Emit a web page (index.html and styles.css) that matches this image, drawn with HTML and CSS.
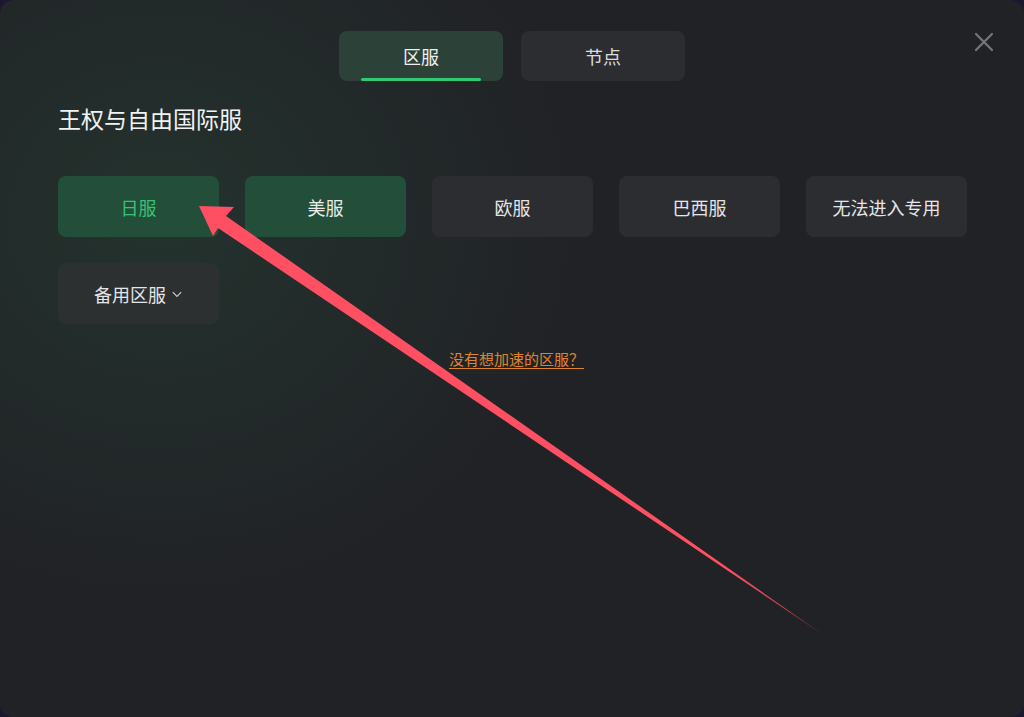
FILE: index.html
```html
<!DOCTYPE html>
<html lang="zh-CN">
<head>
    <meta charset="UTF-8">
    <meta name="viewport" content="width=device-width, initial-scale=1.0">
    <title>区服选择</title>
    <link rel="stylesheet" href="styles.css">
</head>
<body>
    <div class="dialog">
        <button class="close" aria-label="关闭">
            <svg width="20" height="20" viewBox="0 0 20 20"><path d="M2 2 L18 18 M18 2 L2 18" stroke="#74767b" stroke-width="2.2" stroke-linecap="round"/></svg>
        </button>

        <div class="tabs">
            <div class="tab active">区服</div>
            <div class="tab">节点</div>
        </div>

        <h1 class="game-title">王权与自由国际服</h1>

        <div class="servers">
            <div class="server selected">日服</div>
            <div class="server green">美服</div>
            <div class="server">欧服</div>
            <div class="server">巴西服</div>
            <div class="server">无法进入专用</div>
            <div class="server spare">备用区服
                <svg width="12" height="12" viewBox="0 0 10 10"><path d="M1.5 3.5 L5 7 L8.5 3.5" fill="none" stroke="#c9cacc" stroke-width="1"/></svg>
            </div>
        </div>

        <div class="missing">
            <a href="#">没有想加速的区服？</a>
        </div>

        <!-- annotation arrow drawn over the dialog -->
        <svg class="arrow" width="1024" height="717" viewBox="0 0 1024 717">
            <defs>
                <linearGradient id="fade" x1="200" y1="205" x2="822" y2="633" gradientUnits="userSpaceOnUse">
                    <stop offset="0" stop-color="#ff4f63"/>
                    <stop offset="0.85" stop-color="#ff4f63"/>
                    <stop offset="1" stop-color="#a83a48"/>
                </linearGradient>
            </defs>
            <polygon points="199,206 234,207 226,216 822,634 218,228 213,236" fill="url(#fade)"/>
        </svg>
    </div>
</body>
</html>
```

FILE: styles.css
```css
body {
    margin: 0;
    padding: 0;
    background: #1b1730;
    font-family: "Noto Sans CJK SC", "Noto Sans", sans-serif;
    overflow: hidden;
}
.dialog {
    position: relative;
    width: 1024px;
    height: 717px;
    box-sizing: border-box;
    padding: 31px 57px 0 58px;
    border-radius: 14px;
    background:
        radial-gradient(ellipse 420px 380px at 160px 220px, rgba(38, 64, 52, 0.55), rgba(33, 34, 38, 0) 100%),
        #212226;
    color: #e8e9ea;
}
.close {
    position: absolute;
    top: 32px;
    right: 30px;
    padding: 0;
    border: none;
    background: none;
    cursor: pointer;
    line-height: 0;
}
.tabs {
    display: flex;
    justify-content: center;
    gap: 18px;
    margin-left: -1px;
}
.tab {
    position: relative;
    width: 164px;
    height: 50px;
    border-radius: 8px;
    background: #2c2d31;
    display: flex;
    align-items: center;
    justify-content: center;
    font-size: 18px;
    color: #dcdddf;
}
.tab.active {
    background: #2c4137;
    color: #eef0ef;
}
.tab.active::after {
    content: "";
    position: absolute;
    left: 22px;
    right: 22px;
    bottom: 0;
    height: 3px;
    border-radius: 2px;
    background: #2fcb73;
}
.game-title {
    margin: 22px 0 0;
    font-size: 23px;
    font-weight: normal;
    line-height: 30px;
    color: #f1f2f3;
}
.servers {
    display: grid;
    grid-template-columns: repeat(5, 161px);
    grid-auto-rows: 61px;
    column-gap: 26px;
    row-gap: 26px;
    margin-top: 43px;
}
.server {
    border-radius: 8px;
    background: #2c2d31;
    display: flex;
    align-items: center;
    justify-content: center;
    font-size: 18px;
    color: #e4e5e7;
}
.server.green {
    background: #234e3a;
    color: #e9ece9;
}
.server.selected {
    background: #234e3a;
    color: #35c476;
}
.server.spare {
    background: #2c3031;
    gap: 5px;
}
.missing {
    margin-top: 22px;
    text-align: center;
    padding-left: 8px;
}
.missing a {
    font-size: 15px;
    color: #e0842c;
    text-decoration: underline;
    text-underline-offset: 3px;
}
.arrow {
    position: absolute;
    left: 0;
    top: 0;
    pointer-events: none;
}
```
